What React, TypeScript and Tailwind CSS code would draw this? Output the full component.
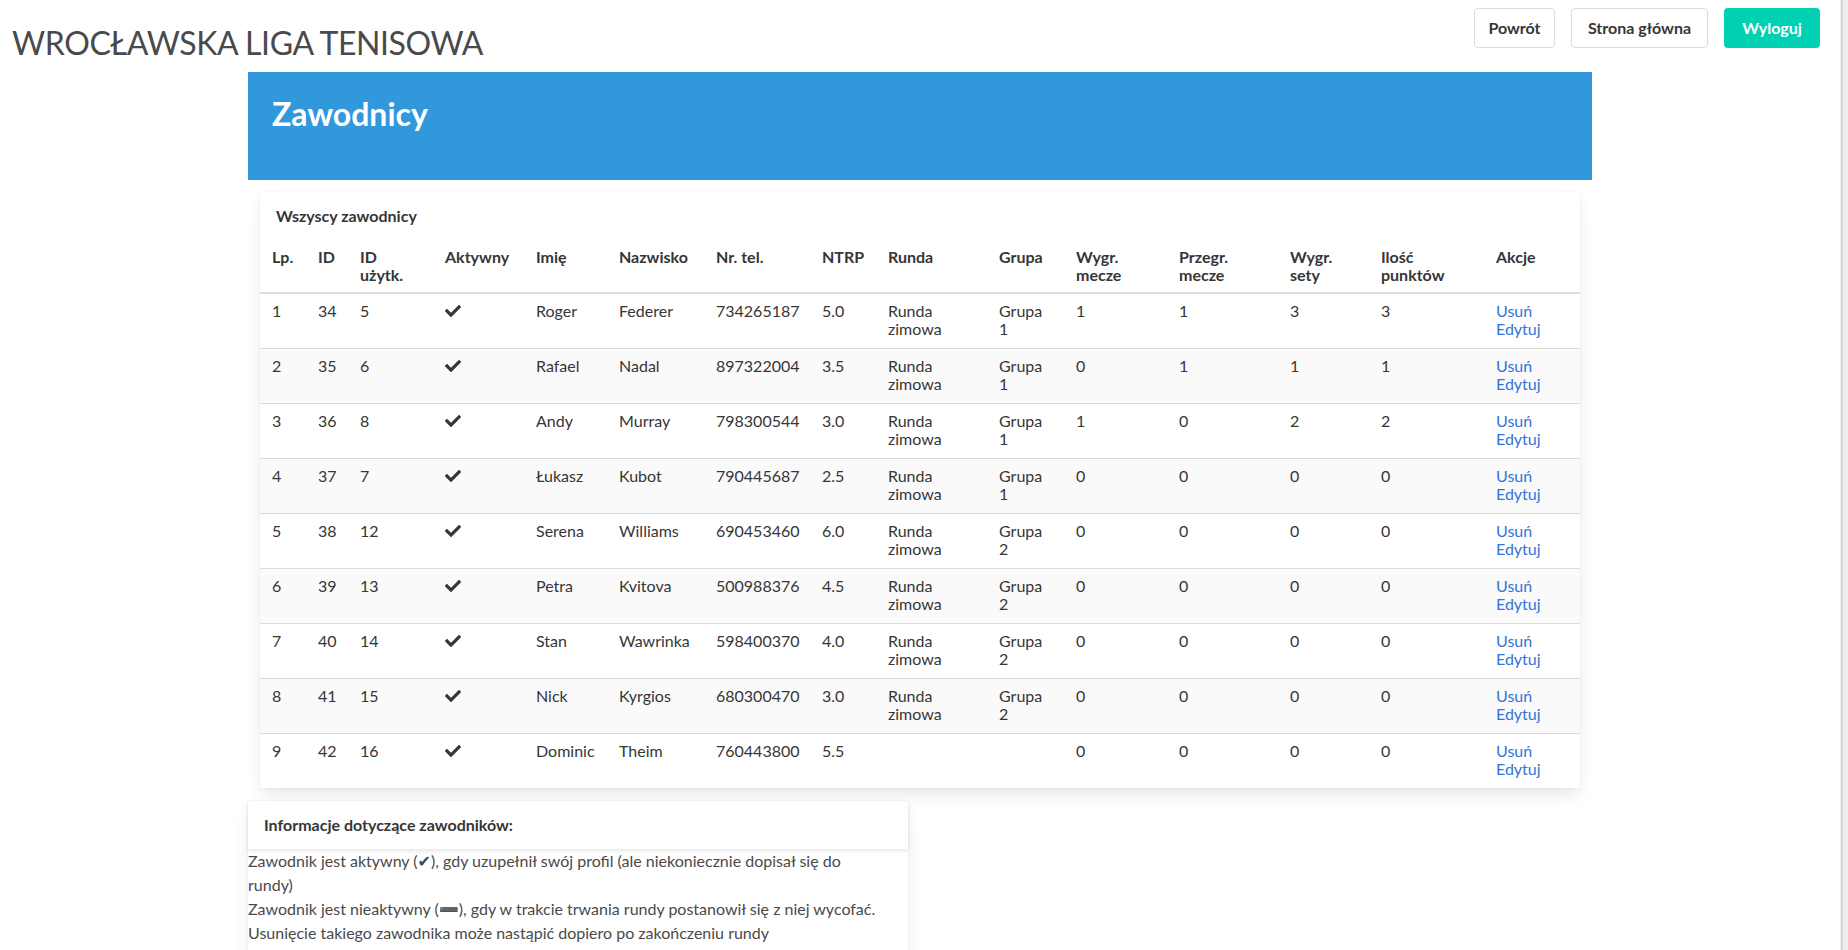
import { FaCheck } from 'react-icons/fa'

type Player = {
  lp: number
  id: number
  userId: number
  name: string
  surname: string
  phone: string
  ntrp: string
  round: string
  group: string
  wonMatches: number
  lostMatches: number
  wonSets: number
  points: number
}

const players: Player[] = [
  { lp: 1, id: 34, userId: 5, name: 'Roger', surname: 'Federer', phone: '734265187', ntrp: '5.0', round: 'Runda zimowa', group: 'Grupa 1', wonMatches: 1, lostMatches: 1, wonSets: 3, points: 3 },
  { lp: 2, id: 35, userId: 6, name: 'Rafael', surname: 'Nadal', phone: '897322004', ntrp: '3.5', round: 'Runda zimowa', group: 'Grupa 1', wonMatches: 0, lostMatches: 1, wonSets: 1, points: 1 },
  { lp: 3, id: 36, userId: 8, name: 'Andy', surname: 'Murray', phone: '798300544', ntrp: '3.0', round: 'Runda zimowa', group: 'Grupa 1', wonMatches: 1, lostMatches: 0, wonSets: 2, points: 2 },
  { lp: 4, id: 37, userId: 7, name: 'Łukasz', surname: 'Kubot', phone: '790445687', ntrp: '2.5', round: 'Runda zimowa', group: 'Grupa 1', wonMatches: 0, lostMatches: 0, wonSets: 0, points: 0 },
  { lp: 5, id: 38, userId: 12, name: 'Serena', surname: 'Williams', phone: '690453460', ntrp: '6.0', round: 'Runda zimowa', group: 'Grupa 2', wonMatches: 0, lostMatches: 0, wonSets: 0, points: 0 },
  { lp: 6, id: 39, userId: 13, name: 'Petra', surname: 'Kvitova', phone: '500988376', ntrp: '4.5', round: 'Runda zimowa', group: 'Grupa 2', wonMatches: 0, lostMatches: 0, wonSets: 0, points: 0 },
  { lp: 7, id: 40, userId: 14, name: 'Stan', surname: 'Wawrinka', phone: '598400370', ntrp: '4.0', round: 'Runda zimowa', group: 'Grupa 2', wonMatches: 0, lostMatches: 0, wonSets: 0, points: 0 },
  { lp: 8, id: 41, userId: 15, name: 'Nick', surname: 'Kyrgios', phone: '680300470', ntrp: '3.0', round: 'Runda zimowa', group: 'Grupa 2', wonMatches: 0, lostMatches: 0, wonSets: 0, points: 0 },
  { lp: 9, id: 42, userId: 16, name: 'Dominic', surname: 'Theim', phone: '760443800', ntrp: '5.5', round: '', group: '', wonMatches: 0, lostMatches: 0, wonSets: 0, points: 0 },
]

// column headers, widths taken from the screenshot
const columns = [
  { label: ['Lp.'], w: 'w-[46px]' },
  { label: ['ID'], w: 'w-[42px]' },
  { label: ['ID', 'użytk.'], w: 'w-[85px]' },
  { label: ['Aktywny'], w: 'w-[91px]' },
  { label: ['Imię'], w: 'w-[83px]' },
  { label: ['Nazwisko'], w: 'w-[97px]' },
  { label: ['Nr. tel.'], w: 'w-[106px]' },
  { label: ['NTRP'], w: 'w-[66px]' },
  { label: ['Runda'], w: 'w-[111px]' },
  { label: ['Grupa'], w: 'w-[77px]' },
  { label: ['Wygr.', 'mecze'], w: 'w-[103px]' },
  { label: ['Przegr.', 'mecze'], w: 'w-[111px]' },
  { label: ['Wygr.', 'sety'], w: 'w-[91px]' },
  { label: ['Ilość', 'punktów'], w: 'w-[115px]' },
  { label: ['Akcje'], w: 'w-[96px]' },
]

const Cell = ({ children }: { children?: React.ReactNode }) => (
  <td className="px-3 pt-2 pb-[10px] align-top">{children}</td>
)

const App = () => {
  return (
    <div className="flex h-screen overflow-hidden bg-white text-[16px] text-[#4a4a4a] font-['Lato','DejaVu_Sans',sans-serif]">
      <div className="flex-1 min-w-0">
        <div className="flex justify-between h-[72px]">
          <h1 className="pl-3 pt-[23px] text-[32px] leading-[40px] tracking-[-0.4px] font-normal text-[#4a4a4a]">WROCŁAWSKA LIGA TENISOWA</h1>
          <div className="flex gap-4 pt-2 pr-5">
            <button type="button" className="h-10 w-[81px] rounded border border-[#dbdbdb] bg-white font-bold text-[#363636]">Powrót</button>
            <button type="button" className="h-10 w-[137px] rounded border border-[#dbdbdb] bg-white font-bold text-[#363636]">Strona główna</button>
            <button type="button" className="h-10 w-[96px] rounded border border-transparent bg-[#00d1b2] font-bold text-white">Wyloguj</button>
          </div>
        </div>

        <div className="w-[1344px] mx-auto">
          <div className="h-[108px] bg-[#3298dc] px-6 pt-6">
            <h2 className="text-[32px] leading-9 font-bold text-white">Zawodnicy</h2>
          </div>

          <div className="px-3 pt-3">
            <div className="bg-white shadow-[0_8px_16px_-2px_rgba(10,10,10,0.1),0_0_0_1px_rgba(10,10,10,0.02)]">
              <div className="px-4 py-3 leading-6 font-bold text-[#363636]">Wszyscy zawodnicy</div>
              <table className="w-full table-fixed border-collapse leading-[18px] text-[#363636]">
                <thead>
                  <tr className="border-b-2 border-[#dbdbdb]">
                    {columns.map((c, i) => (
                      <th key={i} className={`${c.w} px-3 py-2 h-[52px] align-top text-left font-bold`}>
                        {c.label.map((l, j) => (
                          <div key={j}>{l}</div>
                        ))}
                      </th>
                    ))}
                  </tr>
                </thead>
                <tbody>
                  {players.map((p, i) => (
                    <tr key={p.id} className={`${i % 2 === 1 ? 'bg-[#fafafa]' : 'bg-white'} ${i < players.length - 1 ? 'border-b border-[#dbdbdb]' : ''}`}>
                      <Cell>{p.lp}</Cell>
                      <Cell>{p.id}</Cell>
                      <Cell>{p.userId}</Cell>
                      <Cell><FaCheck className="w-4 h-4 mt-[1px] text-[#363636]" /></Cell>
                      <Cell>{p.name}</Cell>
                      <Cell>{p.surname}</Cell>
                      <Cell>{p.phone}</Cell>
                      <Cell>{p.ntrp}</Cell>
                      <Cell>{p.round}</Cell>
                      <Cell>{p.group}</Cell>
                      <Cell>{p.wonMatches}</Cell>
                      <Cell>{p.lostMatches}</Cell>
                      <Cell>{p.wonSets}</Cell>
                      <Cell>{p.points}</Cell>
                      <Cell>
                        <a href="#" className="block text-[#3273dc]">Usuń</a>
                        <a href="#" className="block text-[#3273dc]">Edytuj</a>
                      </Cell>
                    </tr>
                  ))}
                </tbody>
              </table>
            </div>
          </div>

          <div className="mt-[13px] w-[660px] bg-white shadow-[0_8px_16px_-2px_rgba(10,10,10,0.1),0_0_0_1px_rgba(10,10,10,0.02)]">
            <div className="px-4 py-3 leading-6 font-bold text-[#363636] shadow-[0_2px_4px_rgba(10,10,10,0.1)]">Informacje dotyczące zawodników:</div>
            <div className="leading-6 pb-6">
              <p>Zawodnik jest aktywny (✔), gdy uzupełnił swój profil (ale niekoniecznie dopisał się do<br />rundy)</p>
              <p>Zawodnik jest nieaktywny (➖), gdy w trakcie trwania rundy postanowił się z niej wycofać. Usunięcie takiego zawodnika może nastąpić dopiero po zakończeniu rundy</p>
            </div>
          </div>
        </div>
      </div>

      {/* scrollbar strip on the right edge */}
      <div className="w-2 flex bg-[#efeeec]">
        <div className="ml-[1px] w-[2px] bg-[#d6d5d3]" />
      </div>
    </div>
  )
}

export default App
